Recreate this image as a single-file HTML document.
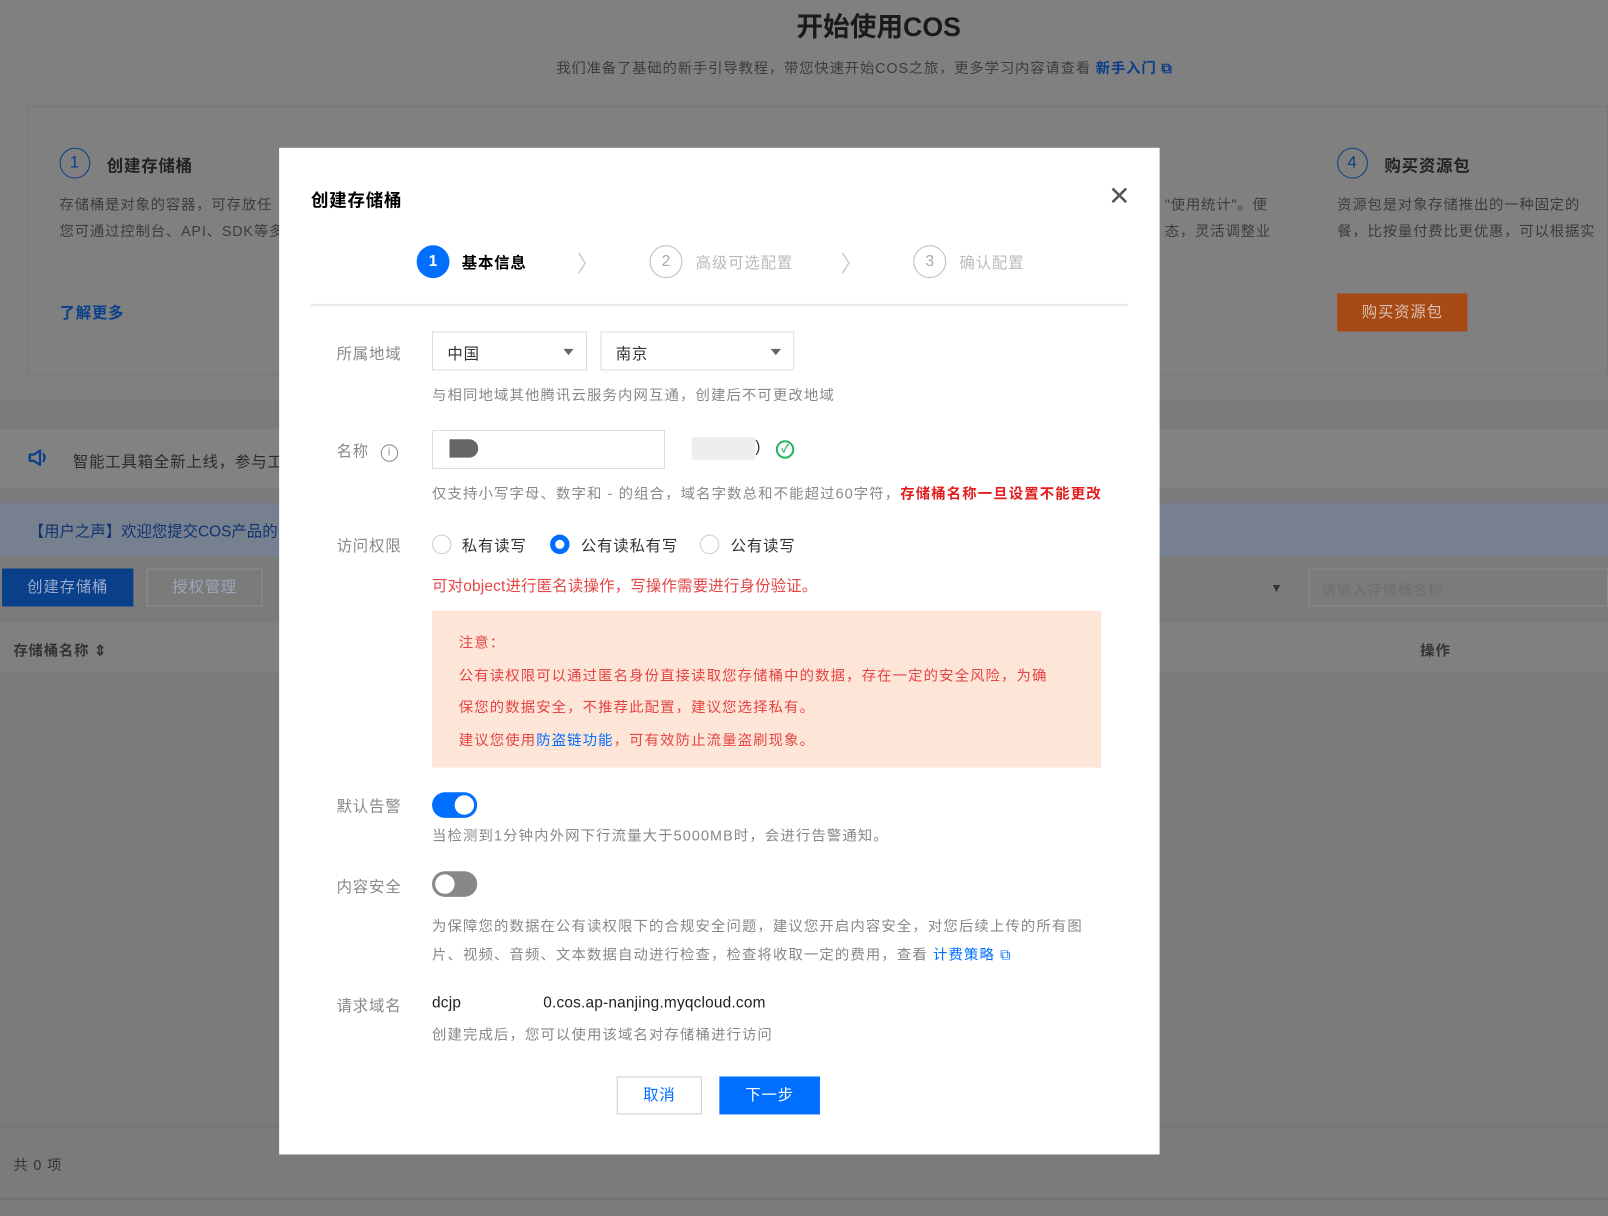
<!DOCTYPE html>
<html><head><meta charset="utf-8"><style>
*{margin:0;padding:0;box-sizing:border-box}
html,body{width:1608px;height:1215px;overflow:hidden;background:#7b7b7b}
body{font-family:"Liberation Sans","Noto Sans CJK SC",sans-serif;letter-spacing:0.8px}
#w{position:absolute;left:0;top:0;width:1567px;height:1185px;transform:scale(1.0262);transform-origin:0 0}
.a{position:absolute;white-space:nowrap}
.bg{color:#3a3a3a}
.m{position:absolute;left:272px;top:144px;width:858px;height:981px;background:#fff}
.lab{position:absolute;left:56px;font-size:15px;color:#888}
.t{font-size:14px;color:#888;letter-spacing:1.1px}
.sel{position:absolute;height:38px;border:1px solid #ddd;font-size:15px;color:#333;padding:10px 14px}
.sel:after{content:"";position:absolute;right:12px;top:16px;border:5px solid transparent;border-top:6px solid #666}
.rad{position:absolute;width:19px;height:19px;border-radius:50%;border:1px solid #ccc}
</style></head><body><div id="w">
<div class="a" style="left:0;top:0;width:1567px;height:390px;background:#808080"></div>
<div class="a" style="left:776px;top:6px;font-size:26px;font-weight:bold;color:#1a1a1a;letter-spacing:0">开始使用COS</div>
<div class="a" style="left:542px;top:56px;font-size:14px;color:#3c3c3c">我们准备了基础的新手引导教程，带您快速开始COS之旅，更多学习内容请查看 <span style="color:#083c88;font-weight:bold">新手入门 ⧉</span></div>
<div class="a" style="left:27px;top:103px;width:1540px;height:262px;border:1px solid #777"></div>
<div class="a" style="left:58px;top:144px;width:30px;height:30px;border:1.5px solid #0a3f8a;border-radius:50%;color:#0a3f8a;font-size:16px;text-align:center;line-height:27px">1</div>
<div class="a bg" style="left:104px;top:148px;font-size:16px;font-weight:bold;color:#222">创建存储桶</div>
<div class="a bg" style="left:58px;top:186px;font-size:14px;line-height:26px;color:#3c3c3c">存储桶是对象的容器，可存放任<br>您可通过控制台、API、SDK等多</div>
<div class="a" style="left:58px;top:294px;font-size:15px;color:#0a3f8a;font-weight:bold">了解更多</div>
<div class="a" style="left:1303px;top:144px;width:30px;height:30px;border:1.5px solid #0a3f8a;border-radius:50%;color:#0a3f8a;font-size:16px;text-align:center;line-height:27px">4</div>
<div class="a" style="left:1349px;top:148px;font-size:16px;font-weight:bold;color:#222">购买资源包</div>
<div class="a" style="left:1303px;top:186px;font-size:14px;line-height:26px;color:#3c3c3c">资源包是对象存储推出的一种固定的<br>餐，比按量付费比更优惠，可以根据实</div>
<div class="a" style="left:1135px;top:186px;font-size:14px;line-height:26px;color:#3c3c3c">"使用统计"。便<br>态，灵活调整业</div>
<div class="a" style="left:1303px;top:286px;width:127px;height:37px;background:#a84a14;color:#d9c0b0;font-size:15px;text-align:center;line-height:37px">购买资源包</div>
<div class="a" style="left:0;top:418px;width:1567px;height:58px;background:#828282"></div>
<svg class="a" style="left:27px;top:436px" width="22" height="20" viewBox="0 0 22 20"><path d="M2 7h4l6-4v14l-6-4H2z" fill="none" stroke="#0a3f8a" stroke-width="2.2" stroke-linejoin="round"/><path d="M15 6q3 4 0 8" fill="none" stroke="#0a3f8a" stroke-width="2.2"/></svg>
<div class="a" style="left:71px;top:439px;font-size:15px;color:#2a2a2a">智能工具箱全新上线，参与工具</div>
<div class="a" style="left:0;top:490px;width:1567px;height:52px;background:#76808f"></div>
<div class="a" style="left:28px;top:507px;font-size:15px;color:#0f3470;letter-spacing:0">【用户之声】欢迎您提交COS产品的</div>
<div class="a" style="left:2px;top:554px;width:128px;height:37px;background:#0a3f8a;color:#9aaccc;font-size:15px;text-align:center;line-height:37px">创建存储桶</div>
<div class="a" style="left:143px;top:554px;width:113px;height:37px;border:1px solid #8e8e8e;color:#9aa6b8;font-size:15px;text-align:center;line-height:35px">授权管理</div>
<div class="a" style="left:1275px;top:554px;width:292px;height:37px;border:1px solid #8a8a8a;color:#6e6e6e;font-size:14px;padding:10px 12px">请输入存储桶名称</div>
<div class="a" style="left:1238px;top:566px;font-size:12px;color:#333">▼</div>
<div class="a" style="left:0;top:606px;width:1567px;height:50px;background:#808080;border-bottom:1px solid #777"></div>
<div class="a" style="left:13px;top:624px;font-size:14px;font-weight:bold;color:#333">存储桶名称 ⇕</div>
<div class="a" style="left:1384px;top:624px;font-size:14px;font-weight:bold;color:#333">操作</div>
<div class="a" style="left:0;top:1097px;width:1567px;height:72px;border-top:1px solid #727272;border-bottom:2px solid #727272"></div>
<div class="a" style="left:13px;top:1125px;font-size:14px;color:#333">共 0 项</div>

<div class="m">
<div class="a" style="left:31px;top:37px;font-size:17px;font-weight:bold;color:#000">创建存储桶</div>
<div class="a" style="left:808px;top:32px;font-size:26px;color:#555;font-weight:300">✕</div>
<div class="a" style="left:134px;top:95px;width:32px;height:32px;border-radius:50%;background:#006eff;color:#fff;font-size:15px;text-align:center;line-height:32px;font-weight:bold;letter-spacing:0">1</div>
<div class="a" style="left:178px;top:101px;font-size:15px;font-weight:bold;color:#000">基本信息</div>
<div class="a" style="left:290px;top:96px;font-size:22px;color:#ccc">〉</div>
<div class="a" style="left:361px;top:95px;width:32px;height:32px;border-radius:50%;border:1px solid #bbb;color:#aaa;font-size:15px;text-align:center;line-height:30px;letter-spacing:0">2</div>
<div class="a" style="left:406px;top:101px;font-size:15px;color:#bbb">高级可选配置</div>
<div class="a" style="left:547px;top:96px;font-size:22px;color:#ccc">〉</div>
<div class="a" style="left:618px;top:95px;width:32px;height:32px;border-radius:50%;border:1px solid #bbb;color:#aaa;font-size:15px;text-align:center;line-height:30px;letter-spacing:0">3</div>
<div class="a" style="left:663px;top:101px;font-size:15px;color:#bbb">确认配置</div>
<div class="a" style="left:31px;top:152px;width:796px;height:2px;background:#e8e8e8"></div>

<div class="a lab" style="top:190px">所属地域</div>
<div class="sel" style="left:149px;top:179px;width:151px">中国</div>
<div class="sel" style="left:313px;top:179px;width:189px">南京</div>
<div class="a t" style="left:149px;top:231px">与相同地域其他腾讯云服务内网互通，创建后不可更改地域</div>

<div class="a lab" style="top:285px">名称 <span style="display:inline-block;width:17px;height:17px;border:1.5px solid #888;border-radius:50%;font-size:11px;text-align:center;line-height:14px;vertical-align:1px;margin-left:6px;letter-spacing:0">i</span></div>
<div class="a" style="left:149px;top:275px;width:227px;height:38px;border:1px solid #ddd"></div>
<div class="a" style="left:166px;top:284px;width:28px;height:18px;background:#666;border-radius:0 9px 9px 0"></div>
<div class="a" style="left:402px;top:282px;width:62px;height:22px;background:#eee"></div>
<div class="a" style="left:464px;top:283px;font-size:15px;color:#333">)</div>
<div class="a" style="left:484px;top:285px;width:18px;height:18px;border:2px solid #28b463;border-radius:50%;color:#28b463;font-size:11px;text-align:center;line-height:14px;font-weight:bold;letter-spacing:0">✓</div>
<div class="a t" style="left:149px;top:327px">仅支持小写字母、数字和 - 的组合，域名字数总和不能超过60字符，<span style="color:#e31d1d;font-weight:bold">存储桶名称一旦设置不能更改</span></div>

<div class="a lab" style="top:377px">访问权限</div>
<div class="rad" style="left:149px;top:377px"></div>
<div class="a" style="left:178px;top:377px;font-size:15px;color:#333">私有读写</div>
<div class="rad" style="left:264px;top:377px;border:5px solid #006eff"></div>
<div class="a" style="left:294px;top:377px;font-size:15px;color:#333">公有读私有写</div>
<div class="rad" style="left:410px;top:377px"></div>
<div class="a" style="left:440px;top:377px;font-size:15px;color:#333">公有读写</div>
<div class="a" style="left:149px;top:416px;font-size:15px;color:#e54545;letter-spacing:0.2px">可对object进行匿名读操作，写操作需要进行身份验证。</div>
<div class="a" style="left:149px;top:451px;width:652px;height:153px;background:#fde5d7"></div>
<div class="a" style="left:175px;top:467px;font-size:14px;color:#e54545;line-height:31.5px;letter-spacing:1.1px">注意：<br>公有读权限可以通过匿名身份直接读取您存储桶中的数据，存在一定的安全风险，为确<br>保您的数据安全，不推荐此配置，建议您选择私有。<br>建议您使用<span style="color:#006eff">防盗链功能</span>，可有效防止流量盗刷现象。</div>

<div class="a lab" style="top:631px">默认告警</div>
<div class="a" style="left:149px;top:628px;width:44px;height:25px;border-radius:13px;background:#006eff"><div style="position:absolute;right:3px;top:3px;width:19px;height:19px;border-radius:50%;background:#fff"></div></div>
<div class="a t" style="left:149px;top:660px">当检测到1分钟内外网下行流量大于5000MB时，会进行告警通知。</div>
<div class="a lab" style="top:709px">内容安全</div>
<div class="a" style="left:149px;top:705px;width:44px;height:25px;border-radius:13px;background:#888"><div style="position:absolute;left:3px;top:3px;width:19px;height:19px;border-radius:50%;background:#fff"></div></div>
<div class="a t" style="left:149px;top:744px;line-height:28px">为保障您的数据在公有读权限下的合规安全问题，建议您开启内容安全，对您后续上传的所有图<br>片、视频、音频、文本数据自动进行检查，检查将收取一定的费用，查看 <span style="color:#006eff">计费策略 ⧉</span></div>
<div class="a lab" style="top:825px">请求域名</div>
<div class="a" style="left:149px;top:825px;font-size:15px;color:#222;letter-spacing:0.2px">dcjp<span style="display:inline-block;width:80px"></span>0.cos.ap-nanjing.myqcloud.com</div>
<div class="a t" style="left:149px;top:854px">创建完成后，您可以使用该域名对存储桶进行访问</div>
<div class="a" style="left:329px;top:905px;width:83px;height:37px;border:1px solid #ccc;color:#006eff;font-size:15px;text-align:center;line-height:35px">取消</div>
<div class="a" style="left:429px;top:905px;width:98px;height:37px;background:#006eff;color:#fff;font-size:15px;text-align:center;line-height:37px">下一步</div>
</div>
</div></body></html>
